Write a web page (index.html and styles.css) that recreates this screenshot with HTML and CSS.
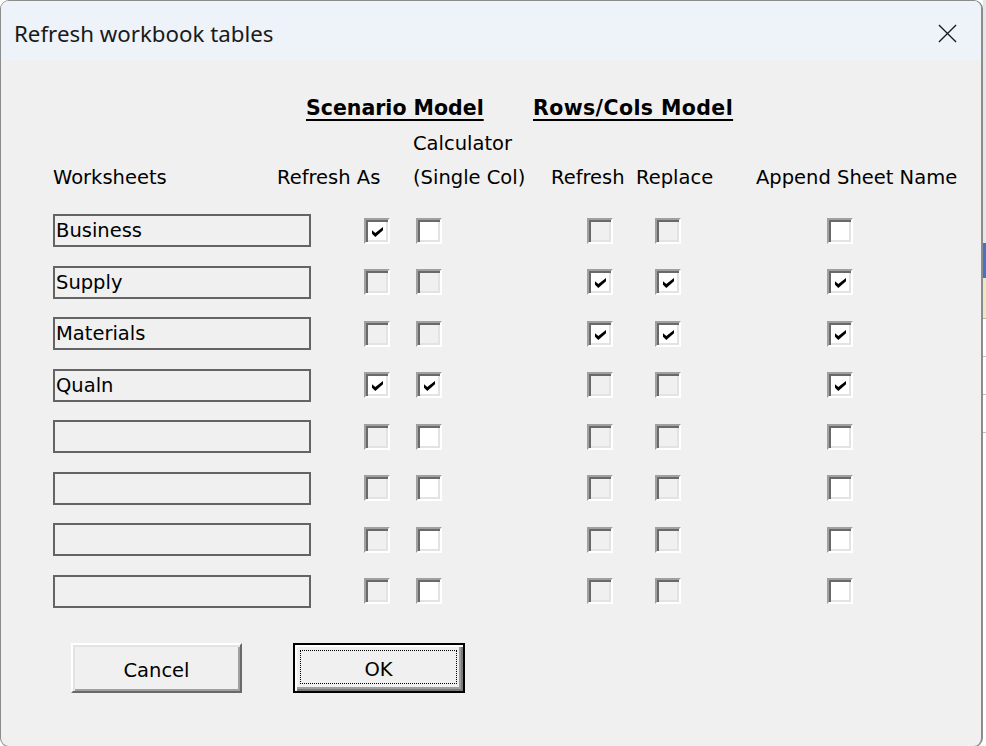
FILE: index.html
```html
<!DOCTYPE html>
<html>
<head>
<meta charset="utf-8">
<link rel="stylesheet" href="styles.css">
</head>
<body>
<div class="screen">
  <div class="window">
    <div class="titlebar">
      <span class="title">Refresh workbook tables</span>
      <svg class="close" width="20" height="20" viewBox="0 0 20 20"><path d="M1 1 L19 19 M19 1 L1 19" stroke="#1a1a1a" stroke-width="1.4" fill="none"/></svg>
    </div>
    <div class="client">
      <div class="groups">
        <span class="group g1">Scenario Model</span>
        <span class="group g2">Rows/Cols Model</span>
      </div>
      <div class="labels">
        <span class="lab c3 r1">Calculator</span>
        <span class="lab c1 r2">Worksheets</span>
        <span class="lab c2 r2">Refresh As</span>
        <span class="lab c3 r2">(Single Col)</span>
        <span class="lab c4 r2">Refresh</span>
        <span class="lab c5 r2">Replace</span>
        <span class="lab c6 r2">Append Sheet Name</span>
      </div>
      <div class="rows">
        <div class="tb">Business</div>
        <div class="cb on"><svg viewBox="0 0 10 9"><polygon points="0,3 3,5.5 10,0 10,3 3,9 0,6"/></svg></div>
        <div class="cb"></div>
        <div class="cb off"></div>
        <div class="cb off"></div>
        <div class="cb"></div>

        <div class="tb">Supply</div>
        <div class="cb off"></div>
        <div class="cb off"></div>
        <div class="cb on"><svg viewBox="0 0 10 9"><polygon points="0,3 3,5.5 10,0 10,3 3,9 0,6"/></svg></div>
        <div class="cb on"><svg viewBox="0 0 10 9"><polygon points="0,3 3,5.5 10,0 10,3 3,9 0,6"/></svg></div>
        <div class="cb on"><svg viewBox="0 0 10 9"><polygon points="0,3 3,5.5 10,0 10,3 3,9 0,6"/></svg></div>

        <div class="tb">Materials</div>
        <div class="cb off"></div>
        <div class="cb off"></div>
        <div class="cb on"><svg viewBox="0 0 10 9"><polygon points="0,3 3,5.5 10,0 10,3 3,9 0,6"/></svg></div>
        <div class="cb on"><svg viewBox="0 0 10 9"><polygon points="0,3 3,5.5 10,0 10,3 3,9 0,6"/></svg></div>
        <div class="cb on"><svg viewBox="0 0 10 9"><polygon points="0,3 3,5.5 10,0 10,3 3,9 0,6"/></svg></div>

        <div class="tb">Qualn</div>
        <div class="cb on"><svg viewBox="0 0 10 9"><polygon points="0,3 3,5.5 10,0 10,3 3,9 0,6"/></svg></div>
        <div class="cb on"><svg viewBox="0 0 10 9"><polygon points="0,3 3,5.5 10,0 10,3 3,9 0,6"/></svg></div>
        <div class="cb off"></div>
        <div class="cb off"></div>
        <div class="cb on"><svg viewBox="0 0 10 9"><polygon points="0,3 3,5.5 10,0 10,3 3,9 0,6"/></svg></div>

        <div class="tb"></div>
        <div class="cb off"></div>
        <div class="cb"></div>
        <div class="cb off"></div>
        <div class="cb off"></div>
        <div class="cb"></div>

        <div class="tb"></div>
        <div class="cb off"></div>
        <div class="cb"></div>
        <div class="cb off"></div>
        <div class="cb off"></div>
        <div class="cb"></div>

        <div class="tb"></div>
        <div class="cb off"></div>
        <div class="cb"></div>
        <div class="cb off"></div>
        <div class="cb off"></div>
        <div class="cb"></div>

        <div class="tb"></div>
        <div class="cb off"></div>
        <div class="cb"></div>
        <div class="cb off"></div>
        <div class="cb off"></div>
        <div class="cb"></div>
      </div>
      <div class="buttons">
        <div class="btn cancel">Cancel</div>
        <div class="btn ok"><span class="focus">OK</span></div>
      </div>
    </div>
  </div>
  <div class="behind">
    <div class="bh b1"></div>
    <div class="bh b2"></div>
    <div class="bh b3"></div>
    <div class="bh b4"></div>
    <div class="bh b5"></div>
    <div class="bh b6"></div>
    <div class="bh b7"></div>
  </div>
</div>
</body>
</html>
```

FILE: styles.css
```css
html, body {
  margin: 0;
  padding: 0;
}
body {
  width: 986px;
  height: 746px;
  overflow: hidden;
  background: #ffffff;
}
.screen {
  display: flex;
  width: 986px;
  height: 746px;
}
.window {
  box-sizing: border-box;
  width: 983px;
  height: 747px;
  border: 1px solid #8c8c8c;
  border-right: 2px solid #8c8c8c;
  border-radius: 9px;
  overflow: hidden;
  background: #f0f0f0;
  display: flex;
  flex-direction: column;
  font-family: "DejaVu Sans", sans-serif;
  font-size: 19.5px;
  color: #000;
}
.titlebar {
  box-sizing: border-box;
  height: 59px;
  flex: none;
  background: #eef2f9;
  display: flex;
  align-items: center;
  justify-content: space-between;
  padding: 5px 24px 0 13px;
}
.title {
  font-family: "Noto Sans", "Open Sans", sans-serif;
  font-size: 22.3px;
  color: #1a1a1a;
}
.close {
  width: 19px;
  height: 19px;
}
.client {
  display: flex;
  flex-direction: column;
  padding: 31px 0 0 52px;
}
.groups {
  display: grid;
  grid-template-columns: 253px 227px auto;
  height: 35px;
  line-height: 35px;
}
.group {
  font-weight: bold;
  font-size: 20.5px;
  text-decoration: underline;
  text-decoration-thickness: 2px;
  text-underline-offset: 4px;
}
.g1 { grid-column: 2; }
.g2 { grid-column: 3; letter-spacing: 0.4px; }
.labels {
  margin-top: 1px;
  display: grid;
  grid-template-columns: 224px 136px 138px 85px 120px auto;
  grid-template-rows: 34px 34px;
  line-height: 34px;
  white-space: nowrap;
}
.c1 { grid-column: 1; }
.c2 { grid-column: 2; }
.c3 { grid-column: 3; }
.c4 { grid-column: 4; }
.c5 { grid-column: 5; }
.c6 { grid-column: 6; }
.r1 { grid-row: 1; }
.r2 { grid-row: 2; }
.rows {
  margin-top: 19px;
  display: grid;
  grid-template-columns: 258px 79px 52px 171px 68px 172px;
  grid-auto-rows: 33px;
  row-gap: 18.5px;
  align-items: center;
}
.tb {
  box-sizing: border-box;
  height: 33px;
  border: 2px solid #646464;
  background: #f0f0f0;
  line-height: 30px;
  padding-left: 1px;
  white-space: nowrap;
  overflow: hidden;
}
.cb {
  justify-self: end;
  box-sizing: border-box;
  width: 26px;
  height: 26px;
  border-style: solid;
  border-width: 2px;
  border-color: #a0a0a0 #ffffff #ffffff #a0a0a0;
  box-shadow: inset 2px 2px 0 #696969, inset -2px -2px 0 #e3e3e3;
  background: #ffffff;
  display: flex;
  align-items: center;
  justify-content: center;
}
.cb.off {
  background: #f0f0f0;
}
.cb svg {
  width: 11px;
  height: 10px;
  margin: 2px 0 0 1px;
  fill: #000;
}
.buttons {
  display: flex;
  margin-top: 35px;
  padding-left: 18px;
  gap: 51px;
}
.btn {
  box-sizing: border-box;
  height: 50px;
  display: flex;
  align-items: center;
  justify-content: center;
  background: #f0f0f0;
}
.cancel {
  width: 171px;
  padding-top: 5px;
  border-style: solid;
  border-width: 2px;
  border-color: #ffffff #696969 #696969 #ffffff;
  box-shadow: inset 2px 2px 0 #e3e3e3, inset -2px -2px 0 #a0a0a0;
}
.ok {
  width: 172px;
  border: 2px solid #000;
  box-shadow: inset 2px 2px 0 #ffffff, inset -2px -2px 0 #7a7a7a, inset -4px -4px 0 #a0a0a0;
  padding: 5px 6px 7px 5px;
}
.focus {
  box-sizing: border-box;
  width: 100%;
  height: 100%;
  display: flex;
  align-items: center;
  justify-content: center;
  padding-top: 5px;
  border: 1px dotted #000;
}
.behind {
  flex: 1;
  display: flex;
  flex-direction: column;
  background: #ffffff;
}
.bh { flex: none; }
.b1 { height: 243px; background: #e6e6e6; }
.b2 { height: 35px; background: #4472c4; }
.b3 { height: 40px; background: #e9e9c4; border-bottom: 1px solid #b0b0b0; }
.b4 { height: 37px; background: #ffffff; border-bottom: 1px solid #c0c0c0; }
.b5 { height: 37px; background: #ffffff; border-bottom: 1px solid #c0c0c0; }
.b6 { height: 37px; background: #ffffff; border-bottom: 1px solid #c0c0c0; }
.b7 { flex: 1; background: #ffffff; }
```
